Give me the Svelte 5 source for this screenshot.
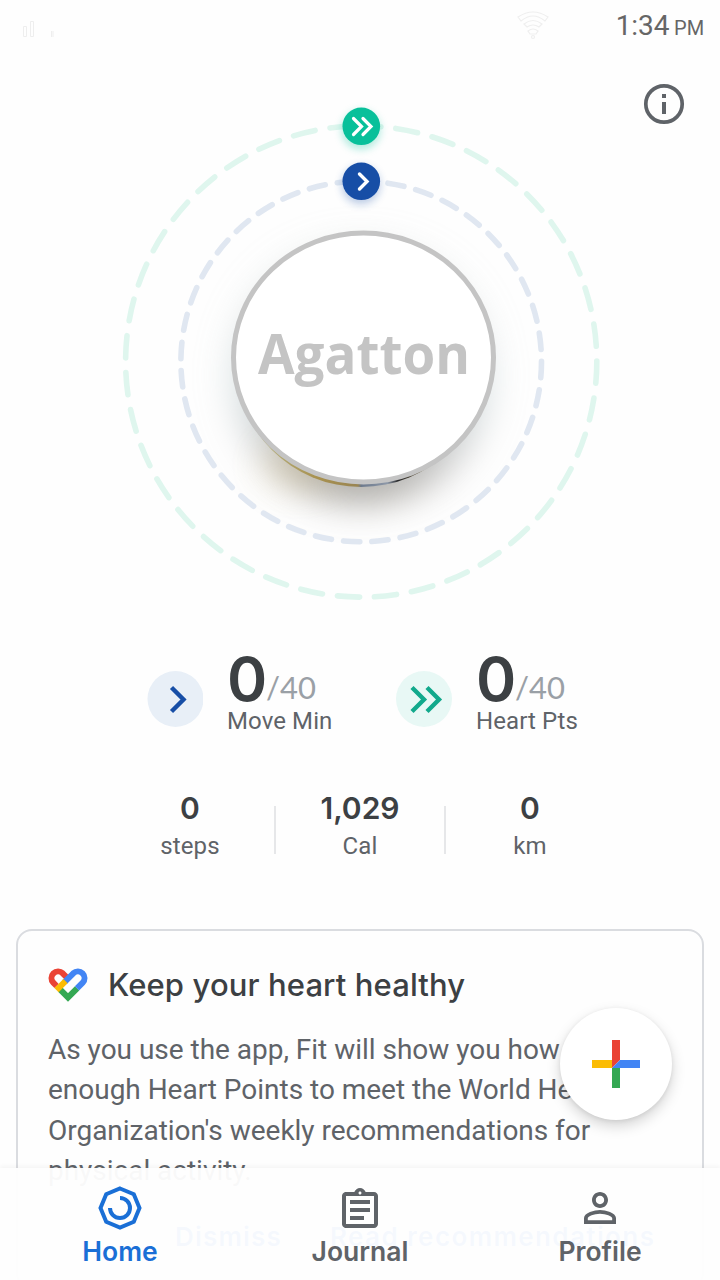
<script>
  const metrics = [
    { label: 'Move Min', value: '0', goal: '/40', kind: 'move' },
    { label: 'Heart Pts', value: '0', goal: '/40', kind: 'heart' }
  ];
  const stats = [
    { value: '0', label: 'steps' },
    { value: '1,029', label: 'Cal' },
    { value: '0', label: 'km' }
  ];
  const lines = [
    'As you use the app, Fit will show you how to get',
    'enough Heart Points to meet the World Health',
    "Organization's weekly recommendations for",
    'physical activity.'
  ];
</script>

<div class="screen">
  <header class="status">
    <svg class="signal" width="40" height="20" viewBox="0 0 40 20" fill="none" stroke="#eeeeee">
      <path d="M3.5 7.5h3v10h-3zM10.500 2.500h3v15h-3zM31.500 12v6M33 12v6" />
    </svg>
    <svg class="wifi" width="34" height="32" viewBox="0 0 34 32" fill="none" stroke="#efefef" stroke-width="1.200">
      <path d="M2 7Q17-3 32 7l-3 4Q17 1 5 11zM8 14q9-7 18 0l-3 3q-6-4-12 0zM12 21q5-4 10 0l-2 3h-6z" />
      <circle cx="17" cy="27" r="1.500" />
    </svg>
    <div class="time">1:34 <small>PM</small></div>
  </header>

  <section class="hero">
    <svg width="720" height="560" viewBox="0 60 720 560">
      <defs>
        <linearGradient id="rim" x1="265" x2="440" y1="0" y2="0" gradientUnits="userSpaceOnUse">
          <stop offset="0" stop-color="#b5af7d" />
          <stop offset=".3" stop-color="#a8914f" />
          <stop offset=".53" stop-color="#998553" />
          <stop offset=".55" stop-color="#6d7a8d" />
          <stop offset=".7" stop-color="#8d98a8" />
          <stop offset=".76" stop-color="#28282a" />
          <stop offset=".88" stop-color="#655a43" />
          <stop offset="1" stop-color="#d3c6a1" />
        </linearGradient>
        <linearGradient id="haze" x1="0" x2="0" y1="235" y2="500" gradientUnits="userSpaceOnUse">
          <stop offset="0" stop-color="#c3c9c5" stop-opacity=".45" />
          <stop offset=".55" stop-color="#b3c6c9" stop-opacity=".52" />
          <stop offset=".8" stop-color="#a9abac" stop-opacity=".65" />
          <stop offset="1" stop-color="#7e796f" stop-opacity=".8" />
        </linearGradient>
        <filter id="soft" filterUnits="userSpaceOnUse" x="120" y="120" width="480" height="480"><feGaussianBlur stdDeviation="18" /></filter>
        <filter id="glow" x="-60%" y="-60%" width="220%" height="220%"><feGaussianBlur stdDeviation="4" /></filter>
      </defs>

      <circle cx="361" cy="374" r="128" fill="url(#haze)" filter="url(#soft)" />
      <ellipse cx="300" cy="464" rx="38" ry="22" fill="#c8a550" opacity=".22" filter="url(#soft)" />

      <g fill="none" stroke-width="5.600" stroke-linecap="round">
        <circle cx="361.200" cy="361.500" r="235.600" stroke="#dff6ee" stroke-dasharray="22.200 15" transform="rotate(-90.600 361.200 361.500)" />
        <circle cx="361.200" cy="361.500" r="180.300" stroke="#e0e7f1" stroke-dasharray="16.300 12.160" transform="rotate(-90.500 361.200 361.500)" />
      </g>

      <circle cx="361" cy="361" r="126" fill="url(#rim)" />
      <ellipse cx="363.500" cy="357.500" rx="130" ry="124.500" fill="#fff" stroke="#c4c4c4" stroke-width="5" />
      <text x="258" y="374" textLength="212" lengthAdjust="spacingAndGlyphs" class="name">Agatton</text>

      <circle cx="361" cy="130" r="19" fill="#08c09a" opacity=".35" filter="url(#glow)" />
      <circle cx="361.300" cy="126.300" r="18.800" fill="#08c09a" />
      <path d="M353.500 118.500l8 8-8 8M363 118.500l8 8-8 8" fill="none" stroke="#fff" stroke-width="3.200" stroke-linecap="round" />
      <circle cx="361" cy="185" r="19" fill="#174ea6" opacity=".3" filter="url(#glow)" />
      <circle cx="361.300" cy="181.300" r="18.800" fill="#174ea6" />
      <path d="M359.500 174l7.500 7.500-7.500 7.500" fill="none" stroke="#fff" stroke-width="3.400" stroke-linecap="round" />

      <circle cx="664" cy="104" r="18.200" fill="none" stroke="#5f6368" stroke-width="3.700" />
      <path d="M662 94h4v4h-4zM662 102h4v12h-4z" fill="#5f6368" />
    </svg>
  </section>

  <section class="metrics">
    {#each metrics as m}
      <div class="metric {m.kind}">
        <svg width="56" height="56" viewBox="0 0 56 56" fill="none" stroke-width="4.400">
          {#if m.kind === 'move'}
            <circle cx="28.500" cy="28" r="28" fill="#e8eff7" />
            <path d="M24.500 16.500L36.500 28.500 24.500 40.500" stroke="#174ea6" />
          {:else}
            <circle cx="28" cy="28" r="28" fill="#e8f8f5" />
            <path d="M16 16.500L28 28.500 16 40.500M31 16.500L43 28.500 31 40.500" stroke="#12a98c" />
          {/if}
        </svg>
        <div class="reading">
          <div class="amount"><b>{m.value}</b><span>{m.goal}</span></div>
          <div class="label">{m.label}</div>
        </div>
      </div>
    {/each}
  </section>

  <section class="stats">
    {#each stats as s}
      <div class="stat"><b>{s.value}</b><span>{s.label}</span></div>
    {/each}
  </section>

  <article class="card">
    <div class="title">
      <svg width="42" height="36" viewBox="0 0 42 36" fill="none" stroke-width="6">
        <path d="M30.100 21.300L21 30.400 13 22.400" stroke="#34a853" />
        <path d="M9.600 19L6.300 15.700A6.650 6.650 0 0 1 15.700 6.300L21 11.600" stroke="#ea4335" />
        <path d="M30 21.400L35.700 15.700A6.650 6.650 0 0 0 26.300 6.300L17.500 15.100" stroke="#4285f4" />
        <path d="M18.500 14.100L9.500 23.100" stroke="#fbbc04" />
      </svg>
      <h2>Keep your heart healthy</h2>
    </div>
    <div class="copy">
      {#each lines as line}<div>{line}</div>{/each}
    </div>
    <div class="actions"><span class="dismiss">Dismiss</span><span class="read">Read recommendations</span></div>
  </article>

  <button class="fab" aria-label="Add">
    <svg width="48" height="48" viewBox="0 0 48 48">
      <path fill="#ea4335" d="M20 0h8v20l-8 8z" />
      <path fill="#fbbc04" d="M0 20h20v8H0z" />
      <path fill="#4285f4" d="M28 20h20v8H20z" />
      <path fill="#34a853" d="M20 28h8v20h-8z" />
    </svg>
  </button>

  <nav>
    <div class="tab active">
      <svg width="48" height="48" viewBox="0 0 48 48" fill="none" stroke="currentColor" stroke-width="4">
        <path d="M24 4.500L37.800 10.200 43.500 24 37.800 37.800 24 43.500 10.200 37.800 4.500 24 10.200 10.200z" />
        <path d="M24 14a10 10 0 1 1-10 10" />
      </svg>
      <span>Home</span>
    </div>
    <div class="tab">
      <svg width="48" height="48" viewBox="0 -1 24 24" fill="currentColor">
        <path d="M7 15h7v2H7zm0-4h10v2H7zm0-4h10v2H7zm12-4h-4.180C14.400 1.840 13.300 1 12 1c-1.300 0-2.400.84-2.820 2H5c-.14 0-.27.01-.4.04-.39.08-.74.28-1.010.55-.18.18-.33.4-.43.640-.1.230-.16.490-.16.770v14c0 .270.060.540.160.780s.250.450.430.640c.270.270.620.470 1.010.550.130.020.260.030.400.030h14c1.100 0 2-.9 2-2V5c0-1.100-.9-2-2-2zm-7-.25c.410 0 .750.340.750.750s-.340.750-.750.750-.750-.340-.750-.750.340-.750.750-.750zM19 19H5V5h14v14z" />
      </svg>
      <span>Journal</span>
    </div>
    <div class="tab">
      <svg width="48" height="48" viewBox="0 0 24 24" fill="currentColor">
        <path d="M12 5.900c1.160 0 2.100.940 2.100 2.100s-.940 2.100-2.100 2.100S9.900 9.160 9.900 8s.940-2.100 2.100-2.100m0 9c2.970 0 6.100 1.460 6.100 2.100v1.100H5.900V17c0-.640 3.130-2.100 6.100-2.100M12 4C9.790 4 8 5.790 8 8s1.790 4 4 4 4-1.790 4-4-1.790-4-4-4zm0 9c-2.670 0-8 1.340-8 4v3h16v-3c0-2.660-5.330-4-8-4z" />
      </svg>
      <span>Profile</span>
    </div>
  </nav>
</div>

<style>
  :global(body) { margin: 0; background: #fefefe; }
  .screen {
    position: relative; width: 720px; height: 1280px; overflow: hidden;
    display: flex; flex-direction: column; background: #fefefe;
    font-family: Roboto, sans-serif; color: #5f6368;
  }
  svg { display: block; flex: none; }
  .status { display: flex; height: 60px; flex: none; box-sizing: border-box; padding: 10px 16px 0 20px; }
  .signal { margin-top: 9px; }
  .wifi { margin-left: 456px; }
  .time { margin-left: auto; font-size: 28px; line-height: 32px; color: #666; letter-spacing: -0.1px; white-space: nowrap; }
  .time small { font-size: 20px; margin-left: -2px; }
  .hero { flex: none; height: 560px; }
  .name { font: 700 56px "Open Sans", sans-serif; fill: #c4c4c4; }

  .metrics { display: flex; flex: none; height: 120px; padding: 31px 0 0 147px; box-sizing: border-box; }
  .metric { display: flex; width: 249px; gap: 24px; }
  .metric > svg { margin-top: 20px; }
  .amount { display: flex; align-items: baseline; height: 56px; line-height: 56px; }
  .amount b { font: 600 61px/56px Inter, sans-serif; color: #3c4043; width: 40px; }
  .amount span { font: 400 31px/40px Lato, sans-serif; color: #9aa0a6; position: relative; top: -2px; left: -1px; }
  .label { font-size: 24px; line-height: 28px; letter-spacing: 0.1px; }

  .stats { display: grid; grid-template-columns: repeat(3, 170px); justify-content: center; flex: none; height: 189px; padding-top: 50px; box-sizing: border-box; }
  .stat { position: relative; display: flex; flex-direction: column; align-items: center; }
  .stat b { font: 600 30px/36px Inter, sans-serif; color: #3c4043; }
  .stat span { font-size: 24px; line-height: 28px; margin-top: 6px; letter-spacing: 0.1px; }
  .stat + .stat::before { content: ''; position: absolute; left: -1px; top: 16px; width: 2px; height: 48px; background: #e6e7e9; }

  .card { flex: none; height: 360px; margin: 0 16px; box-sizing: border-box; border: 2px solid #dadce0; border-radius: 16px; padding: 36px 30px 0; }
  .title { display: flex; align-items: center; gap: 19px; height: 36px; }
  .title svg { margin-left: -1px; }
  h2 { margin: 0; font: 500 31px/36px Inter, sans-serif; letter-spacing: 0.12px; color: #3c4043; white-space: nowrap; }
  .copy { margin-top: 26.500px; font-size: 28px; line-height: 40.500px; letter-spacing: -0.02px; white-space: nowrap; }
  .actions { display: flex; margin: 29px 0 0 127px; font: 600 26px/32px Inter, sans-serif; color: #1a73e8; white-space: nowrap; letter-spacing: 1.200px; }
  .dismiss { width: 155px; }
  .read { letter-spacing: 1.400px; }

  .fab {
    position: absolute; left: 560px; top: 1008px; width: 112px; height: 112px; border: 0; border-radius: 50%;
    background: #fff; padding: 0; display: grid; place-items: center;
    box-shadow: 0 6px 14px rgba(0,0,0,.17), 0 1px 4px rgba(0,0,0,.08);
  }
  nav {
    position: absolute; left: 0; right: 0; top: 1168px; height: 112px; display: grid; grid-template-columns: repeat(3, 240px);
    background: rgba(254,254,254,.96); box-shadow: 0 -2px 4px rgba(0,0,0,.04);
  }
  .tab { display: flex; flex-direction: column; align-items: center; padding-top: 16px; }
  .tab span { font: 600 26.500px/32px Inter, sans-serif; margin-top: 3px; }
  .active { color: #1a6fd6; }
</style>
